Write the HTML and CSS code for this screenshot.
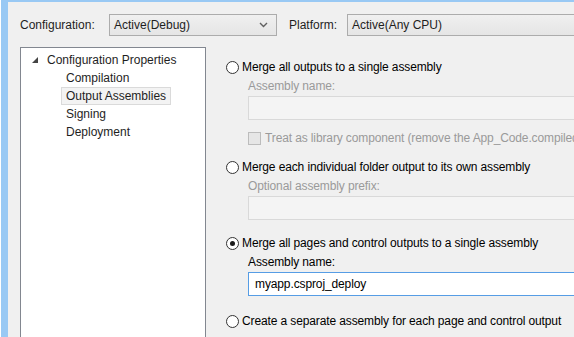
FILE: index.html
```html
<!DOCTYPE html>
<html lang="en">
<head>
    <meta charset="UTF-8">
    <title>Output Assemblies</title>
    <link rel="stylesheet" href="styles.css">
</head>
<body>
    <div class="window">
        <div class="toolbar">
            <span class="label cfg-label">Configuration:</span>
            <div class="combo cfg-combo">
                <span>Active(Debug)</span>
                <svg class="chevron" width="9" height="6" viewBox="0 0 9 6"><polyline points="1,1 4.5,4.5 8,1" fill="none" stroke="#606060" stroke-width="1.4"/></svg>
            </div>
            <span class="label plat-label">Platform:</span>
            <div class="combo plat-combo">
                <span>Active(Any CPU)</span>
            </div>
        </div>

        <div class="main">
            <div class="tree">
                <div class="tree-root">
                    <svg class="expander" width="6" height="6" viewBox="0 0 6 6"><polygon points="6,0 6,6 0,6" fill="#444"/></svg>
                    <span>Configuration Properties</span>
                </div>
                <div class="tree-item">Compilation</div>
                <div class="tree-item selected">Output Assemblies</div>
                <div class="tree-item">Signing</div>
                <div class="tree-item">Deployment</div>
            </div>

            <div class="options">
                <div class="radio-row first">
                    <span class="radio"></span>
                    <span>Merge all outputs to a single assembly</span>
                </div>
                <div class="sub disabled">Assembly name:</div>
                <div class="textbox disabled"></div>
                <div class="check-row disabled">
                    <span class="checkbox"></span>
                    <span>Treat as library component (remove the App_Code.compiled file)</span>
                </div>

                <div class="radio-row second">
                    <span class="radio"></span>
                    <span>Merge each individual folder output to its own assembly</span>
                </div>
                <div class="sub disabled">Optional assembly prefix:</div>
                <div class="textbox disabled"></div>

                <div class="radio-row third">
                    <span class="radio checked"></span>
                    <span>Merge all pages and control outputs to a single assembly</span>
                </div>
                <div class="sub">Assembly name:</div>
                <div class="textbox active">myapp.csproj_deploy</div>

                <div class="radio-row fourth">
                    <span class="radio"></span>
                    <span>Create a separate assembly for each page and control output</span>
                </div>
            </div>
        </div>
    </div>
</body>
</html>
```

FILE: styles.css
```css
* {
    margin: 0;
    padding: 0;
    box-sizing: border-box;
}

html, body {
    height: 100%;
    overflow: hidden;
}

body {
    font-family: 'Liberation Sans', Arial, sans-serif;
    font-size: 12px;
    line-height: 16px;
    color: #000;
    background: #fff;
}

.window {
    height: 100%;
    margin-left: 1px;
    background: #f0f0f0;
    border-left: 7px solid #99c9f4;
    border-top: 2px solid #99c9f4;
    display: flex;
    flex-direction: column;
    white-space: nowrap;
}

.toolbar {
    display: flex;
    align-items: center;
    height: 45px;
    padding-top: 1px;
    padding-left: 12px;
}

.label {
    color: #1e1e1e;
}

.cfg-label {
    width: 89px;
}

.combo {
    height: 22px;
    border: 1px solid #acacac;
    background: linear-gradient(#f0f0f0, #e5e5e5);
    display: flex;
    align-items: center;
    padding-left: 4px;
    color: #1e1e1e;
}

.cfg-combo {
    width: 168px;
    justify-content: space-between;
    padding-right: 8px;
}

.plat-label {
    margin-left: 12px;
    width: 58px;
}

.plat-combo {
    flex: 1;
    border-right: none;
}

.main {
    flex: 1;
    display: flex;
}

.tree {
    margin-left: 12px;
    width: 186px;
    background: #fff;
    border: 1px solid #828790;
    border-bottom: none;
    padding-top: 3px;
    color: #1e1e1e;
}

.tree-root {
    display: flex;
    align-items: center;
    height: 18px;
    padding-left: 11px;
}

.expander {
    margin-right: 9px;
}

.tree-item {
    height: 18px;
    line-height: 16px;
    margin-left: 40px;
    padding-left: 4px;
    border: 1px solid transparent;
    width: fit-content;
    padding-right: 4px;
}

.tree-item.selected {
    background: #f3f3f3;
    border-color: #dadada;
}

.options {
    flex: 1;
    padding-left: 20px;
    padding-top: 12px;
    display: flex;
    flex-direction: column;
    overflow: hidden;
    letter-spacing: -0.12px;
}

.radio-row {
    display: flex;
    align-items: center;
    height: 16px;
}

.radio-row.second { margin-top: 13px; }
.radio-row.third { margin-top: 15px; }
.radio-row.fourth { margin-top: 17px; }

.radio {
    flex-shrink: 0;
    width: 13px;
    height: 13px;
    border: 1px solid #333;
    border-radius: 50%;
    background: #fff;
    margin-right: 3px;
    display: flex;
    align-items: center;
    justify-content: center;
}

.radio.checked::after {
    content: "";
    width: 5px;
    height: 5px;
    border-radius: 50%;
    background: #1a1a1a;
}

.sub {
    margin-top: 3px;
    margin-left: 22px;
    height: 16px;
}

.disabled {
    color: #9a9a9a;
}

.textbox {
    margin-top: 2px;
    margin-left: 22px;
    margin-right: -4px;
    height: 24px;
    border: 1px solid #d9d9d9;
    background: #f4f4f4;
    border-right: none;
}

.textbox.active {
    background: #fff;
    border-color: #569de5;
    padding-left: 6px;
    line-height: 22px;
    color: #000;
}

.check-row {
    display: flex;
    align-items: center;
    margin-top: 10px;
    margin-left: 22px;
    height: 16px;
}

.checkbox {
    flex-shrink: 0;
    width: 13px;
    height: 13px;
    border: 1px solid #bcbcbc;
    background: #e6e6e6;
    margin-right: 4px;
}
```
